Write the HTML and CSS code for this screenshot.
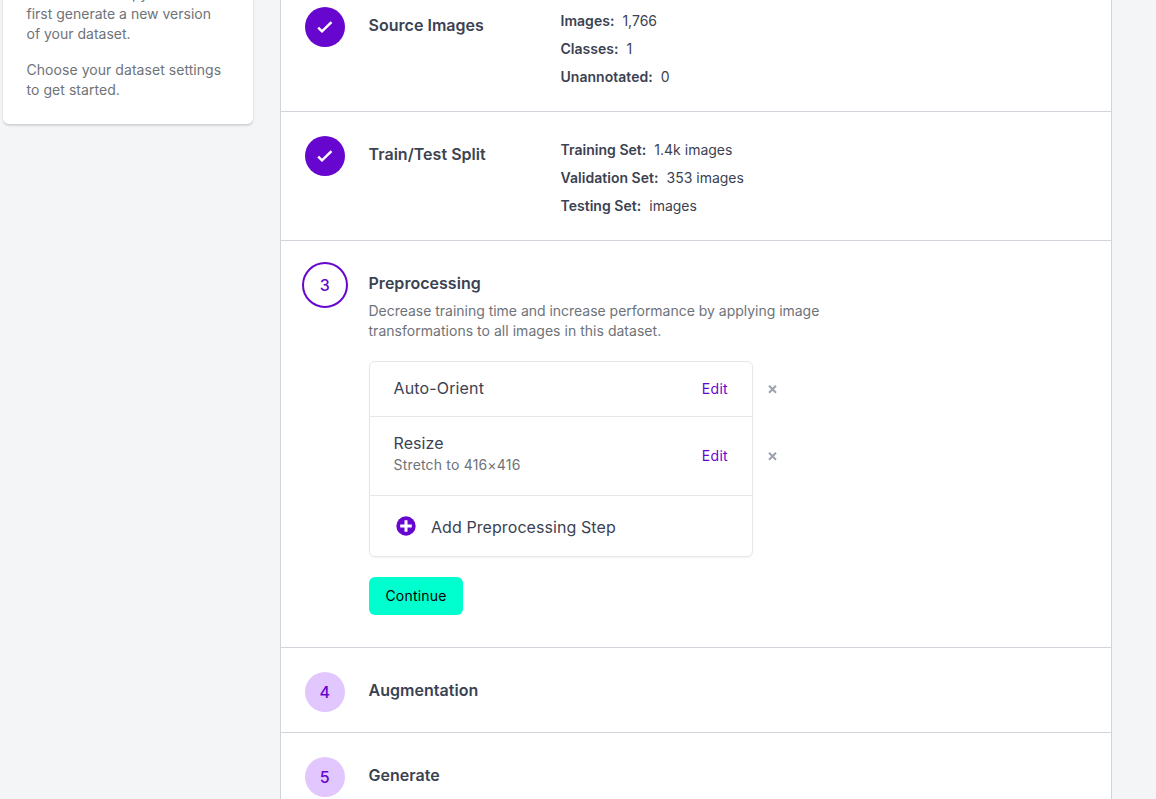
FILE: index.html
```html
<!DOCTYPE html>
<html lang="en">
<head>
<meta charset="utf-8">
<title>Generate Version</title>
<link rel="stylesheet" href="styles.css">
</head>
<body>
<div class="page">
  <aside class="info">
    <p>create a new copy must<br>first generate a new version<br>of your dataset.</p>
    <p class="hint">Choose your dataset settings<br>to get started.</p>
  </aside>
  <main class="steps">
    <section class="step step-summary">
      <div class="marker"><span class="badge done"><svg width="16" height="12" viewBox="0 0 16 12"><path d="M1.2 6.6 5 10.3 14.5 1.2"/></svg></span></div>
      <h2>Source Images</h2>
      <dl>
        <div><dt>Images:</dt><dd>1,766</dd></div>
        <div><dt>Classes:</dt><dd>1</dd></div>
        <div><dt>Unannotated:</dt><dd>0</dd></div>
      </dl>
    </section>
    <section class="step step-summary">
      <div class="marker"><span class="badge done"><svg width="16" height="12" viewBox="0 0 16 12"><path d="M1.2 6.6 5 10.3 14.5 1.2"/></svg></span></div>
      <h2>Train/Test Split</h2>
      <dl>
        <div><dt>Training Set:</dt><dd>1.4k images</dd></div>
        <div><dt>Validation Set:</dt><dd>353 images</dd></div>
        <div><dt>Testing Set:</dt><dd>images</dd></div>
      </dl>
    </section>
    <section class="step step-active">
      <div class="marker"><span class="badge current">3</span></div>
      <div class="content">
        <h2>Preprocessing</h2>
        <p class="desc">Decrease training time and increase performance by applying image<br><span class="desc-end">transformations to all images in this dataset.</span></p>
        <div class="options">
          <div class="list">
            <div class="item item-first"><div class="name">Auto-Orient</div><a class="edit">Edit</a></div>
            <div class="item item-second"><div class="name">Resize<div class="note">Stretch to 416×416</div></div><a class="edit">Edit</a></div>
            <div class="item item-add"><svg class="plus" width="20" height="20" viewBox="0 0 20 20"><circle cx="10" cy="10" r="9.7"/><path d="M10 4.2v11.6M4.2 10h11.6"/></svg><span>Add Preprocessing Step</span></div>
          </div>
          <div class="removes">
            <svg width="9" height="9" viewBox="0 0 9 9"><path d="M1 .8l7 7M8 .8l-7 7"/></svg>
            <svg width="9" height="9" viewBox="0 0 9 9"><path d="M1 .8l7 7M8 .8l-7 7"/></svg>
          </div>
        </div>
        <button class="continue">Continue</button>
      </div>
    </section>
    <section class="step step-pending">
      <div class="marker"><span class="badge pending">4</span></div>
      <h2>Augmentation</h2>
    </section>
    <section class="step step-pending">
      <div class="marker"><span class="badge pending">5</span></div>
      <h2>Generate</h2>
    </section>
  </main>
</div>
</body>
</html>
```
FILE: styles.css
```css
* { box-sizing: border-box; }
body {
  margin: 0;
  height: 799px;
  overflow: hidden;
  background: #f4f5f7;
  font-family: Inter, "Liberation Sans", sans-serif;
  color: #3b4252;
}
h2, p, dl, dd { margin: 0; }
.page {
  display: flex;
  align-items: flex-start;
  height: 799px;
  padding-left: 3px;
  overflow: hidden;
}
.info {
  width: 250px;
  margin-top: -40px;
  margin-right: 27px;
  padding: 24px 0 24px 23.5px;
  background: #fff;
  border-radius: 6px;
  box-shadow: 0 1px 3px rgba(0,0,0,.1), 0 2px 2px rgba(0,0,0,.08);
  color: #6e7379;
  font-size: 14px;
  line-height: 20px;
  white-space: nowrap;
}
.info p + p { margin-top: 16px; }
.hint { letter-spacing: .05px; }
.steps {
  width: 832px;
  margin-top: -17px;
  border: 1px solid #d2d4dc;
  border-top: 0;
  background: #fff;
}
.step {
  display: flex;
  padding-top: 24px;
  border-bottom: 1px solid #d2d4dc;
}
.step-summary { height: 129px; }
.step-active { height: 407px; }
.step-pending { height: 85px; }
.marker {
  display: flex;
  align-items: center;
  justify-content: center;
  width: 87.5px;
  height: 40px;
  flex: none;
}
.badge {
  display: flex;
  align-items: center;
  justify-content: center;
  flex: none;
  width: 40px;
  height: 40px;
  border-radius: 50%;
  color: #6706ce;
  font-size: 16px;
  font-weight: 500;
}
.done { background: #6706ce; }
.done path { fill: none; stroke: #fff; stroke-width: 2.5; }
.current { width: 46px; height: 46px; border: 2px solid #6706ce; }
.pending { background: #e2c7ff; }
h2 {
  width: 192px;
  padding-top: 6px;
  font-size: 16px;
  line-height: 24px;
  font-weight: 600;
  letter-spacing: .03px;
}
dl { padding-top: 4px; }
dl div {
  display: flex;
  gap: 8px;
  height: 28px;
  font-size: 14px;
  line-height: 20px;
}
dt { font-weight: 600; letter-spacing: .03px; }
.desc {
  margin-top: 6px;
  color: #6e7379;
  font-size: 14px;
  line-height: 20px;
  letter-spacing: -.02px;
  white-space: nowrap;
}
.desc-end { letter-spacing: .03px; }
.options { display: flex; margin: 20px 0 0 .5px; }
.list {
  width: 384px;
  border: 1px solid #e5e7eb;
  border-radius: 6px;
  box-shadow: 0 1px 2px rgba(0,0,0,.05);
}
.item {
  display: flex;
  justify-content: space-between;
  align-items: center;
  padding: 0 24px 0 23.5px;
  font-size: 16px;
  line-height: 24px;
  letter-spacing: .08px;
}
.item-first { height: 55px; border-bottom: 1px solid #e5e7eb; }
.item-first .name { padding-bottom: 2px; letter-spacing: .15px; }
.item-second { height: 79px; border-bottom: 1px solid #e5e7eb; }
.item-second .name { padding-bottom: 6px; }
.item-add { height: 60px; justify-content: flex-start; gap: 15px; padding: 2px 26px 0; }
.item-add svg { margin-bottom: 2px; }
.note { color: #6e7379; font-size: 14px; line-height: 20px; letter-spacing: .18px; }
.edit { color: #6706ce; font-size: 14px; line-height: 20px; letter-spacing: .3px; }
.plus circle { fill: #6706ce; }
.plus path { stroke: #fff; stroke-width: 3; }
.removes {
  display: flex;
  flex-direction: column;
  gap: 58px;
  padding: 24px 0 0 15px;
}
.removes path { fill: none; stroke: #9ca3af; stroke-width: 2; }
.continue {
  display: block;
  width: 94px;
  height: 38px;
  margin: 20px 0 0 .5px;
  padding: 0;
  border: 0;
  border-radius: 6px;
  background: #00ffce;
  color: #000;
  font: 400 14px/20px Inter, "Liberation Sans", sans-serif;
  letter-spacing: .2px;
}
```
